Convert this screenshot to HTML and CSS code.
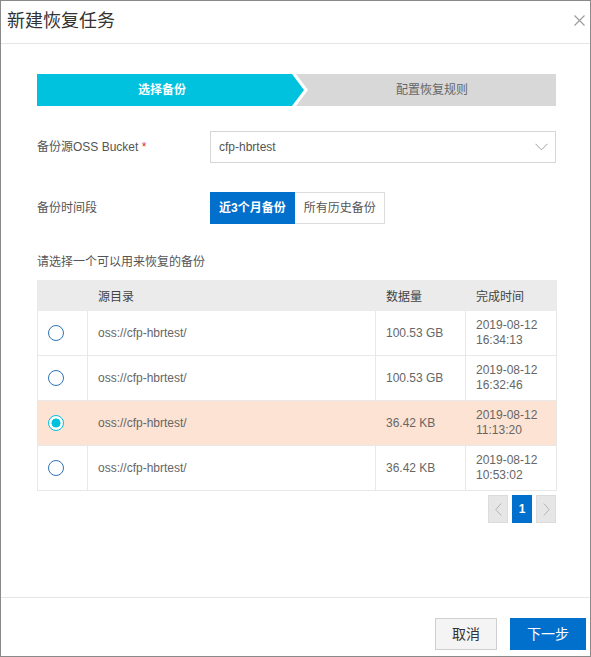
FILE: index.html
```html
<!DOCTYPE html>
<html lang="zh-CN">
<head>
<meta charset="utf-8">
<title>新建恢复任务</title>
<link rel="stylesheet" href="styles.css">
</head>
<body>
<div class="dialog">
  <div class="dlg-header">
    <div class="dlg-title">新建恢复任务</div>
    <span class="dlg-close" aria-label="关闭">
      <svg width="11" height="11" viewBox="0 0 11 11"><path d="M0.5 0.5 L10.5 10.5 M10.5 0.5 L0.5 10.5" stroke="#9a9a9a" stroke-width="1.1" fill="none"/></svg>
    </span>
  </div>

  <div class="dlg-body">
    <div class="steps">
      <div class="step step-active">选择备份</div>
      <div class="step step-next">配置恢复规则</div>
    </div>

    <div class="form-row row-bucket">
      <div class="form-label">备份源OSS Bucket <span class="req">*</span></div>
      <div class="select">
        <span class="select-value">cfp-hbrtest</span>
        <svg class="select-arrow" width="13" height="8" viewBox="0 0 13 8"><path d="M0.5 0.8 L6.5 6.8 L12.5 0.8" stroke="#a0a0a0" stroke-width="1" fill="none"/></svg>
      </div>
    </div>

    <div class="form-row row-period">
      <div class="form-label">备份时间段</div>
      <div class="seg">
        <span class="seg-btn seg-on">近3个月备份</span>
        <span class="seg-btn">所有历史备份</span>
      </div>
    </div>

    <div class="hint">请选择一个可以用来恢复的备份</div>

    <table class="grid">
      <colgroup>
        <col class="c-radio"><col class="c-src"><col class="c-size"><col class="c-time">
      </colgroup>
      <thead>
        <tr><th></th><th>源目录</th><th>数据量</th><th>完成时间</th></tr>
      </thead>
      <tbody>
        <tr>
          <td class="td-radio"><span class="radio"></span></td>
          <td>oss://cfp-hbrtest/</td><td>100.53 GB</td><td>2019-08-12<br>16:34:13</td>
        </tr>
        <tr>
          <td class="td-radio"><span class="radio"></span></td>
          <td>oss://cfp-hbrtest/</td><td>100.53 GB</td><td>2019-08-12<br>16:32:46</td>
        </tr>
        <tr class="selected">
          <td class="td-radio"><span class="radio radio-on"></span></td>
          <td>oss://cfp-hbrtest/</td><td>36.42 KB</td><td>2019-08-12<br>11:13:20</td>
        </tr>
        <tr>
          <td class="td-radio"><span class="radio"></span></td>
          <td>oss://cfp-hbrtest/</td><td>36.42 KB</td><td>2019-08-12<br>10:53:02</td>
        </tr>
      </tbody>
    </table>

    <div class="pager">
      <span class="pg pg-nav">
        <svg width="7" height="13" viewBox="0 0 7 13"><path d="M6.2 0.5 L0.8 6.5 L6.2 12.5" stroke="#b5b5b5" stroke-width="1" fill="none"/></svg>
      </span>
      <span class="pg pg-cur">1</span>
      <span class="pg pg-nav">
        <svg width="7" height="13" viewBox="0 0 7 13"><path d="M0.8 0.5 L6.2 6.5 L0.8 12.5" stroke="#b5b5b5" stroke-width="1" fill="none"/></svg>
      </span>
    </div>
  </div>

  <div class="dlg-footer">
    <span class="btn btn-normal">取消</span>
    <span class="btn btn-primary">下一步</span>
  </div>
</div>
</body>
</html>
```

FILE: styles.css
```css
* { box-sizing: border-box; }

html, body {
  margin: 0;
  padding: 0;
  background: #fff;
}

body {
  font-family: "Liberation Sans", Arial, "Noto Sans CJK SC", sans-serif;
  font-size: 12px;
  color: #555;
}

.dialog {
  width: 591px;
  height: 657px;
  border: 1px solid #8a8a8a;
  display: flex;
  flex-direction: column;
  background: #fff;
}

.dlg-header {
  height: 43px;
  border-bottom: 1px solid #e6e6e6;
  display: flex;
  align-items: flex-start;
  justify-content: space-between;
  padding: 0 5px 0 6px;
  flex: none;
}

.dlg-title {
  font-size: 18px;
  line-height: 20px;
  margin-top: 10px;
  color: #333;
}

.dlg-close {
  margin-top: 14px;
  display: flex;
  width: 11px;
  height: 11px;
}

.dlg-body {
  flex: 1;
  padding: 30px 34px 0 36px;
}

/* steps */
.steps {
  display: flex;
  height: 32px;
}

.step {
  height: 32px;
  line-height: 32px;
  font-size: 12px;
  text-align: center;
}

.step-active {
  width: 267px;
  flex: none;
  background: #00c1de;
  color: #fff;
  font-weight: bold;
  padding-right: 17px;
  clip-path: polygon(0 0, calc(100% - 12px) 0, 100% 50%, calc(100% - 12px) 100%, 0 100%);
  position: relative;
  z-index: 1;
}

.step-next {
  flex: 1;
  margin-left: -8px;
  background: #d8d8d9;
  color: #666;
  padding-left: 12px;
  clip-path: polygon(0 0, 100% 0, 100% 100%, 0 100%, 12px 50%);
}

/* form */
.form-row {
  display: flex;
  align-items: center;
}

.row-bucket { margin-top: 25px; }
.row-period { margin-top: 29px; }

.form-label {
  width: 173px;
  flex: none;
  color: #555;
  line-height: 18px;
}

.req {
  color: #e0301e;
}

.select {
  flex: 1;
  height: 32px;
  border: 1px solid #d6d6d6;
  display: flex;
  align-items: center;
  justify-content: space-between;
  padding: 0 7px 0 8px;
}

.select-value {
  color: #555;
}

.select-arrow {
  display: block;
}

.seg {
  display: flex;
}

.seg-btn {
  height: 32px;
  line-height: 30px;
  padding: 0 8px;
  border: 1px solid #dcdcdc;
  color: #555;
}

.seg-on {
  background: #0070cc;
  border-color: #0070cc;
  color: #fff;
  font-weight: bold;
}

.seg-btn + .seg-btn {
  border-left: none;
  padding: 0 8px 0 9px;
}

.hint {
  margin-top: 29px;
  line-height: 18px;
  color: #555;
}

/* table */
.grid {
  margin-top: 9px;
  width: 519px;
  border-collapse: collapse;
  table-layout: fixed;
}

.c-radio { width: 50px; }
.c-src { width: 288px; }
.c-size { width: 90px; }
.c-time { width: 91px; }

.grid th {
  height: 30px;
  background: #ebebeb;
  text-align: left;
  font-weight: normal;
  color: #444;
  padding: 0 10px;
  border: 1px solid #ebebeb;
}

.grid td {
  height: 45px;
  border: 1px solid #e8e8e8;
  padding: 0 10px;
  color: #666;
  line-height: 15px;
  vertical-align: middle;
}

.grid tr.selected td {
  background: #fde3d3;
}

.grid td.td-radio {
  text-align: left;
  padding: 0 0 0 10px;
}

.radio {
  display: inline-block;
  width: 16px;
  height: 16px;
  border-radius: 50%;
  border: 1px solid #2f73b6;
  vertical-align: middle;
  background: #fff;
}

.radio-on {
  border-color: #00c1de;
  background: radial-gradient(circle, #00c1de 0, #00c1de 4.2px, #fff 4.8px);
}

/* pager */
.pager {
  margin-top: 4px;
  display: flex;
  justify-content: flex-end;
  gap: 4px;
}

.pg {
  width: 20px;
  height: 28px;
  display: flex;
  align-items: center;
  justify-content: center;
}

.pg-nav {
  background: #e6e6e6;
  border: 1px solid #dcdcdc;
}

.pg-cur {
  background: #0070cc;
  color: #fff;
  font-weight: bold;
  font-size: 12px;
}

/* footer */
.dlg-footer {
  flex: none;
  border-top: 1px solid #e6e6e6;
  padding: 20px 4px 6px 0;
  display: flex;
  justify-content: flex-end;
  gap: 13px;
}

.btn {
  height: 32px;
  line-height: 30px;
  font-size: 14px;
  text-align: center;
  border: 1px solid transparent;
}

.btn-normal {
  width: 62px;
  background: #f4f4f4;
  border-color: #cfcfcf;
  color: #333;
}

.btn-primary {
  width: 76px;
  background: #0070cc;
  border-color: #0070cc;
  color: #fff;
}
```
